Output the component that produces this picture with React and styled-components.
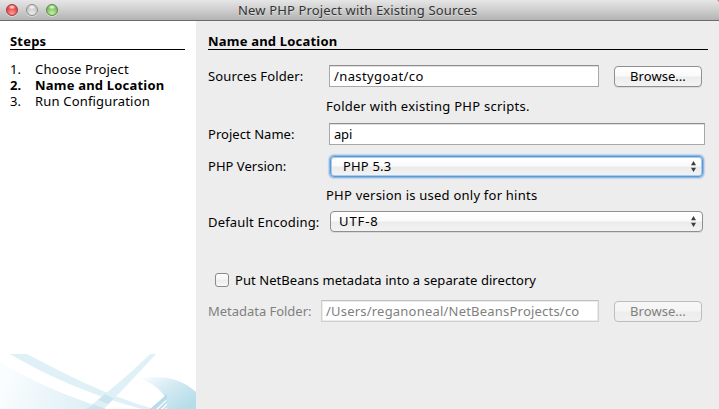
import React from 'react';
import styled, { createGlobalStyle, css } from 'styled-components';

const GlobalStyle = createGlobalStyle`
  * { box-sizing: border-box; }
  body { margin: 0; overflow: hidden; }
`;

const Window = styled.div`
  width: 719px;
  height: 409px;
  display: flex;
  flex-direction: column;
  background: #ededed;
  color: #000;
  font: 13px/18px "Noto Sans", "Open Sans", sans-serif;
  white-space: nowrap;
  overflow: hidden;
`;

const TitleBar = styled.header`
  height: 21px;
  flex: none;
  display: grid;
  grid-template-columns: 238px 1fr;
  align-items: center;
  background: linear-gradient(#e6e6e6, #cecece 50%, #b3b3b3);
  border-bottom: 1px solid #6b6b6b;
`;

const Lights = styled.div`
  display: flex;
  gap: 8px;
  padding-left: 6px;
  height: 20px;
  align-items: center;
`;

const lightColours = {
  red: ['#ff9c94', '#e43c40', '#a03a38'],
  grey: ['#ececec', '#c6c6c6', '#8c8c8c'],
  green: ['#c6f0a6', '#72bd54', '#5a8748'],
};

const Light = styled.span`
  width: 12px;
  height: 12px;
  border-radius: 50%;
  border: 1px solid ${(p) => lightColours[p.$tone][2]};
  background:
    radial-gradient(ellipse 4px 2.5px at 50% 20%, rgba(255, 255, 255, 0.95), transparent),
    radial-gradient(circle at 50% 85%, ${(p) => lightColours[p.$tone][0]}, ${(p) => lightColours[p.$tone][1]} 70%);
  box-shadow: 0 1px 0 rgba(255, 255, 255, 0.45);
`;

const Text = styled.span`
  letter-spacing: ${(p) => p.$track || 0}px;
`;

const Title = styled(Text)`
  color: #333;
  line-height: 20px;
  text-shadow: 0 1px 0 rgba(255, 255, 255, 0.4);
`;

const Body = styled.div`
  flex: 1;
  display: flex;
  min-height: 0;
`;

const Sidebar = styled.aside`
  width: 196px;
  flex: none;
  display: flex;
  flex-direction: column;
  justify-content: space-between;
  background: #fff;
`;

const Heading = styled.h2`
  margin: 0;
  height: 18px;
  font-size: 13px;
  font-weight: 700;
  line-height: 18px;
  letter-spacing: ${(p) => p.$track}px;
  border-bottom: 1px solid #000;
`;

const StepsPane = styled.div`
  padding: 11px 11px 0 10px;
`;

const StepList = styled.ol`
  list-style: none;
  margin: 11px 0 0;
  padding: 0;
`;

const Step = styled.li`
  display: grid;
  grid-template-columns: 25px 1fr;
  height: 16px;
  line-height: 16px;
  font-weight: ${(p) => (p.$current ? 700 : 400)};
`;

const Swoosh = styled.svg`
  display: block;
  width: 196px;
  height: 55px;
`;

const Content = styled.main`
  flex: 1;
  padding: 11px 11px 0 12px;
`;

const Row = styled.div`
  display: flex;
  align-items: center;
  height: 22px;
  margin-top: ${(p) => p.$gap}px;
  padding-left: ${(p) => p.$indent || 0}px;
`;

const Label = styled.label`
  width: ${(p) => p.$width || 121}px;
  flex: none;
  letter-spacing: ${(p) => p.$track || 0}px;
  color: ${(p) => (p.$disabled ? '#808080' : '#000')};
`;

const Hint = styled.p`
  margin: ${(p) => p.$gap}px 0 0 118px;
  height: 18px;
  letter-spacing: ${(p) => p.$track}px;
`;

const Field = styled.div`
  width: ${(p) => p.$width}px;
  height: 22px;
  padding: 1px 4px 0;
  line-height: 18px;
  background: #fff;
  border: 1px solid #a8a8a8;
  border-top-color: #8e8e8e;
  box-shadow: inset 0 1px 0 #e0e0e0;
  ${(p) => p.$disabled && css`
    color: #808080;
    border-color: #cfcfcf;
    border-top-color: #c0c0c0;
    box-shadow: inset 0 0 0 1px #ececec;
  `}
`;

const Button = styled.button`
  width: 88px;
  height: 21px;
  margin: 1px 0 0 15px;
  padding: 0 0 1px;
  font: inherit;
  line-height: 18px;
  color: #000;
  border: 1px solid #8f8f8f;
  border-radius: 4px;
  background: linear-gradient(#fff, #fafafa 48%, #ededed 52%, #f3f3f3);
  box-shadow: 0 1px 0 rgba(0, 0, 0, 0.08);
  ${(p) => p.$disabled && css`
    color: #808080;
    border-color: #bdbdbd;
    background: linear-gradient(#f7f7f7, #f4f4f4 48%, #ededed 52%, #f0f0f0);
    box-shadow: none;
  `}
`;

const Select = styled.div`
  width: 373px;
  height: 21px;
  align-self: ${(p) => (p.$focused ? 'flex-end' : 'flex-start')};
  margin-left: 1px;
  padding: 0 6px 0 ${(p) => (p.$focused ? 12 : 8)}px;
  line-height: 19px;
  display: flex;
  justify-content: space-between;
  align-items: center;
  border: 1px solid #8f8f8f;
  border-radius: 4px;
  background: linear-gradient(#fff, #fafafa 48%, #ebebeb 52%, #f3f3f3);
  box-shadow: 0 1px 0 rgba(0, 0, 0, 0.08);
  ${(p) => p.$focused && css`
    border-color: #5f96cc;
    box-shadow: 0 0 0 1px #8bb9e8, 0 0 1px 2px rgba(139, 185, 232, 0.45), inset 0 0 0 1px #a9cdf0;
  `}
`;

const Checkbox = styled.span`
  width: 14px;
  height: 14px;
  margin-right: 6px;
  border: 1px solid #8a8a8a;
  border-radius: 3px;
  background: linear-gradient(#fff, #f4f4f4 50%, #ececec 55%, #f8f8f8);
`;

const Arrows = () => (
  <svg width="5" height="11" viewBox="0 0 5 11" fill="#3d3d3d">
    <path d="M2.5 0 5 4.2H0ZM2.5 11 5 6.8H0Z" />
  </svg>
);

const Decoration = () => (
  <Swoosh viewBox="0 0 196 55">
    <defs>
      <linearGradient id="wave" x1="0" y1="0.6" x2="1" y2="0.75">
        <stop offset="0" stopColor="#fafdfe" />
        <stop offset="1" stopColor="#d9edf5" />
      </linearGradient>
      <linearGradient id="curl" x1="0" y1="0" x2="1" y2="0.8">
        <stop offset="0" stopColor="#fcfeff" />
        <stop offset="0.45" stopColor="#d5ebf3" />
        <stop offset="1" stopColor="#b5dce9" />
      </linearGradient>
    </defs>
    <path d="M0 8.5C32 27 66 42 106 55H0Z" fill="url(#wave)" />
    <path d="M10 0H27C65 20 105 41 154 55H142C100 44 50 24 10 0Z" fill="#e0f0f7" />
    <path d="M150 0H156C139 18 122 37 104 55H86C112 35 132 18 150 0Z" fill="#e0f0f7" />
    <path d="M105 40 114 44.5 108 50 98 46Z" fill="#cbe5ef" />
    <path d="M86 55 94 50.5 106 55Z" fill="#cbe5ef" />
    <path d="M140 24.5C163 21 181 24 196 38V55H167C169 43 158 31 140 24.5Z" fill="url(#curl)" />
    <path d="M167 40 150 55H156L167 45Z" fill="#b9dce9" />
    <path d="M167 46.5 158 55H161L167 49Z" fill="#b9dce9" />
    <path d="M167 51 163 55H165L167 53Z" fill="#b9dce9" />
  </Swoosh>
);

const Corner = styled.svg`
  position: absolute;
  left: 717px;
  top: 0;
`;

const steps = [
  { name: 'Choose Project', track: 0.17 },
  { name: 'Name and Location', track: 0.2, current: true },
  { name: 'Run Configuration', track: 0.18 },
];

export default function App() {
  return (
    <Window>
      <GlobalStyle />
      <TitleBar>
        <Lights>
          <Light $tone="red" />
          <Light $tone="grey" />
          <Light $tone="green" />
        </Lights>
        <Title $track={0.15}>New PHP Project with Existing Sources</Title>
        <Corner width="2" height="2"><path d="M0 0H2V2Z" fill="#e58078" /></Corner>
      </TitleBar>
      <Body>
        <Sidebar>
          <StepsPane>
            <Heading $track={0.2}>Steps</Heading>
            <StepList>
              {steps.map((s, i) => (
                <Step key={s.name} $current={s.current}>
                  <span>{i + 1}.</span>
                  <Text $track={s.track}>{s.name}</Text>
                </Step>
              ))}
            </StepList>
          </StepsPane>
          <Decoration />
        </Sidebar>
        <Content>
          <Heading $track={0.2}>Name and Location</Heading>
          <Row $gap={15}>
            <Label $track={0.13}>Sources Folder:</Label>
            <Field $width={270}><Text $track={0.4}>/nastygoat/co</Text></Field>
            <Button><Text $track={0.04}>Browse...</Text></Button>
          </Row>
          <Hint $gap={10} $track={0.26}>Folder with existing PHP scripts.</Hint>
          <Row $gap={8}>
            <Label $track={0.04}>Project Name:</Label>
            <Field $width={376}><Text $track={-0.2}>api</Text></Field>
          </Row>
          <Row $gap={10}>
            <Label $track={0.03}>PHP Version:</Label>
            <Select $focused><Text $track={0.17}>PHP 5.3</Text><Arrows /></Select>
          </Row>
          <Hint $gap={9} $track={0.23}>PHP version is used only for hints</Hint>
          <Row $gap={7}>
            <Label $track={0.19}>Default Encoding:</Label>
            <Select><Text $track={0.9}>UTF-8</Text><Arrows /></Select>
          </Row>
          <Row $gap={36} $indent={7}>
            <Checkbox />
            <Text $track={0.066}>Put NetBeans metadata into a separate directory</Text>
          </Row>
          <Row $gap={9}>
            <Label $width={113} $track={-0.03} $disabled>Metadata Folder:</Label>
            <Field $width={278} $disabled><Text $track={0.21}>/Users/reganoneal/NetBeansProjects/co</Text></Field>
            <Button $disabled><Text $track={0.04}>Browse...</Text></Button>
          </Row>
        </Content>
      </Body>
    </Window>
  );
}
